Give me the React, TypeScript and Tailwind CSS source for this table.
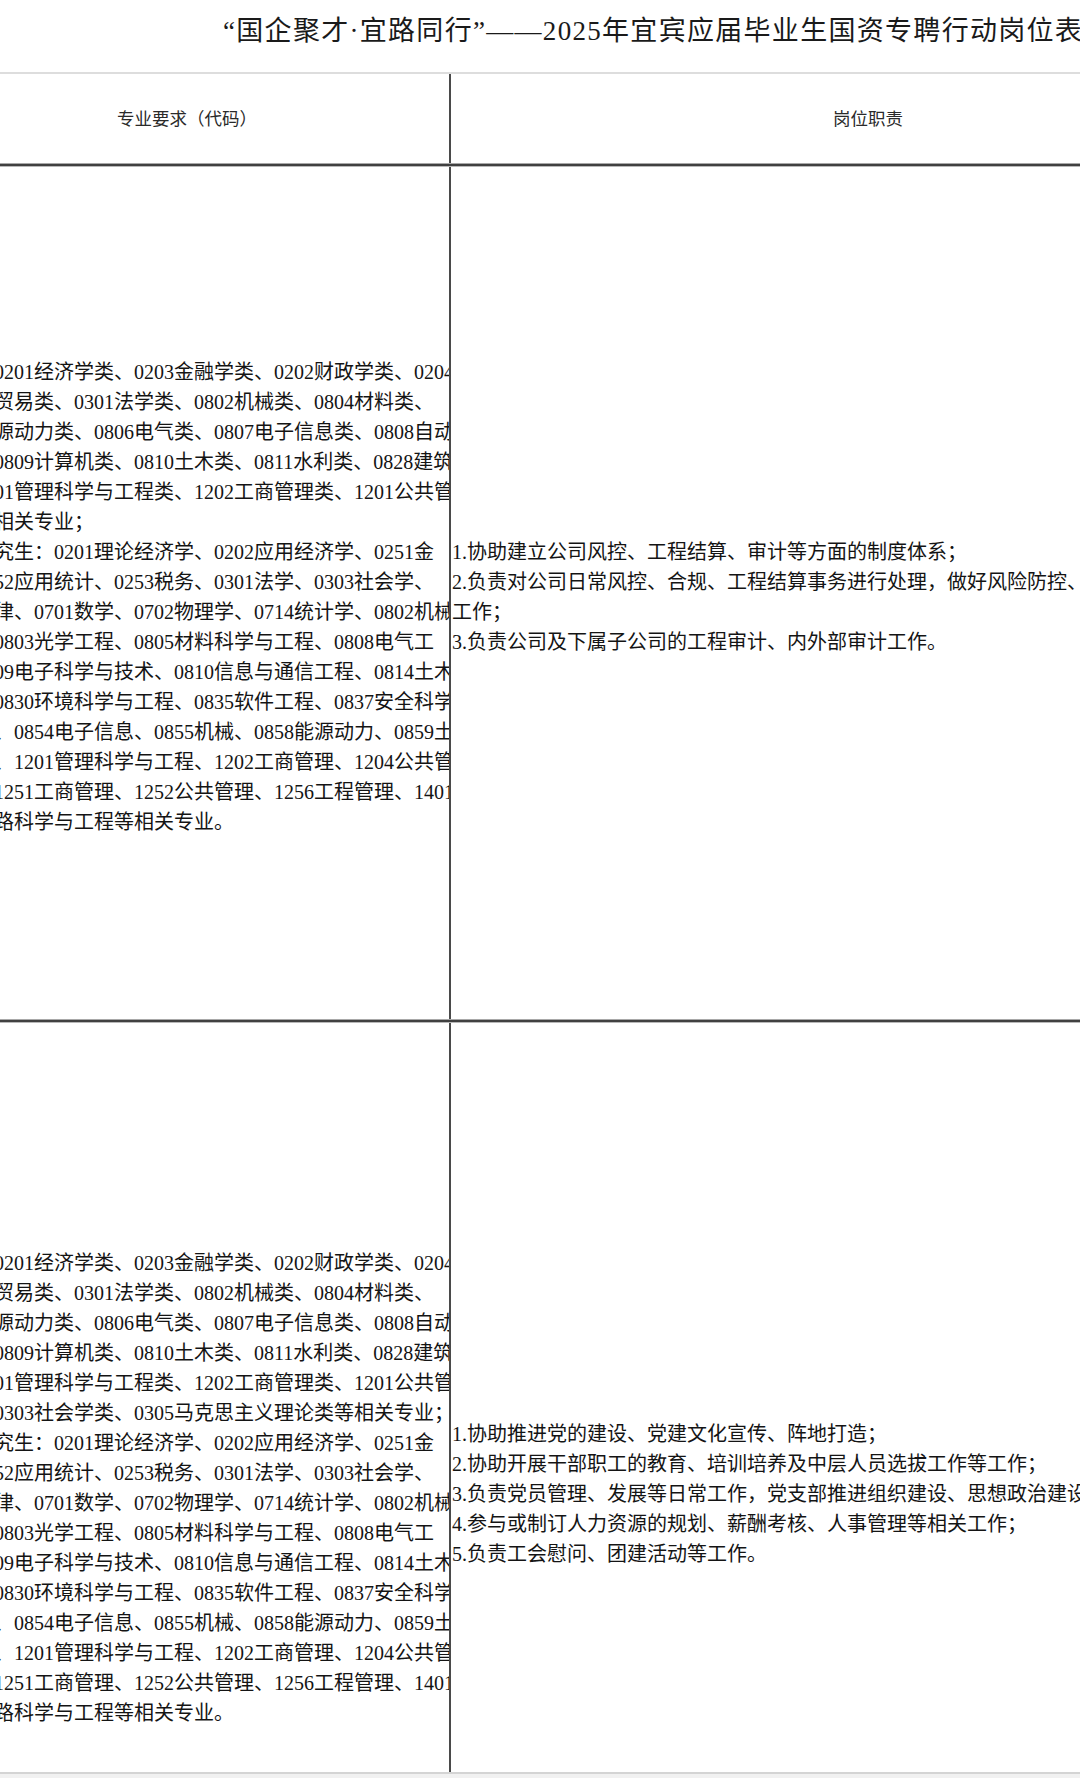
import React from "react";

const row1Left: string[] = [
  "0201经济学类、0203金融学类、0202财政学类、0204",
  "贸易类、0301法学类、0802机械类、0804材料类、",
  "源动力类、0806电气类、0807电子信息类、0808自动",
  "0809计算机类、0810土木类、0811水利类、0828建筑",
  "01管理科学与工程类、1202工商管理类、1201公共管",
  "相关专业；",
  "究生：0201理论经济学、0202应用经济学、0251金",
  "52应用统计、0253税务、0301法学、0303社会学、",
  "律、0701数学、0702物理学、0714统计学、0802机械",
  "0803光学工程、0805材料科学与工程、0808电气工",
  "09电子科学与技术、0810信息与通信工程、0814土木",
  "0830环境科学与工程、0835软件工程、0837安全科学",
  "、0854电子信息、0855机械、0858能源动力、0859土",
  "、1201管理科学与工程、1202工商管理、1204公共管",
  "1251工商管理、1252公共管理、1256工程管理、1401",
  "路科学与工程等相关专业。",
];

const row2Left: string[] = [
  "0201经济学类、0203金融学类、0202财政学类、0204",
  "贸易类、0301法学类、0802机械类、0804材料类、",
  "源动力类、0806电气类、0807电子信息类、0808自动",
  "0809计算机类、0810土木类、0811水利类、0828建筑",
  "01管理科学与工程类、1202工商管理类、1201公共管",
  "0303社会学类、0305马克思主义理论类等相关专业；",
  "究生：0201理论经济学、0202应用经济学、0251金",
  "52应用统计、0253税务、0301法学、0303社会学、",
  "律、0701数学、0702物理学、0714统计学、0802机械",
  "0803光学工程、0805材料科学与工程、0808电气工",
  "09电子科学与技术、0810信息与通信工程、0814土木",
  "0830环境科学与工程、0835软件工程、0837安全科学",
  "、0854电子信息、0855机械、0858能源动力、0859土",
  "、1201管理科学与工程、1202工商管理、1204公共管",
  "1251工商管理、1252公共管理、1256工程管理、1401",
  "路科学与工程等相关专业。",
];

const row1Right: string[] = [
  "1.协助建立公司风控、工程结算、审计等方面的制度体系；",
  "2.负责对公司日常风控、合规、工程结算事务进行处理，做好风险防控、",
  "工作；",
  "3.负责公司及下属子公司的工程审计、内外部审计工作。",
];

const row2Right: string[] = [
  "1.协助推进党的建设、党建文化宣传、阵地打造；",
  "2.协助开展干部职工的教育、培训培养及中层人员选拔工作等工作；",
  "3.负责党员管理、发展等日常工作，党支部推进组织建设、思想政治建设",
  "4.参与或制订人力资源的规划、薪酬考核、人事管理等相关工作；",
  "5.负责工会慰问、团建活动等工作。",
];

function DoubleLine() {
  return (
    <div className="flex flex-col shrink-0">
      <div className="h-[1px] bg-[#a8a8a8]" />
      <div className="h-[2px] bg-[#404040]" />
      <div className="h-[1px] bg-[#b8b8b8]" />
    </div>
  );
}

function LeftCell({ lines, pad }: { lines: string[]; pad: string }) {
  return (
    <div className={"w-[449px] shrink-0 overflow-hidden flex flex-col justify-center " + pad}>
      {lines.map((l, i) => (
        <div key={i} className="ml-[-6px] whitespace-nowrap text-[20px] leading-[30px]">
          {l}
        </div>
      ))}
    </div>
  );
}

function RightCell({ lines }: { lines: string[] }) {
  return (
    <div className="flex-1 min-w-0 overflow-hidden flex flex-col justify-center pt-[7px] pl-[1px]">
      {lines.map((l, i) => (
        <div key={i} className="whitespace-nowrap text-[20px] leading-[30px]">
          {l}
        </div>
      ))}
    </div>
  );
}

function Divider() {
  return <div className="w-[2px] shrink-0 bg-[#4a4a4a]" />;
}

export default function App() {
  return (
    <div className="w-[1080px] h-[1778px] overflow-hidden bg-white flex flex-col text-[#141414] font-['Liberation_Serif','Noto_Sans_CJK_SC',serif]">
      <div className="flex-1 min-h-0 overflow-hidden flex flex-col">
        <div className="h-[72px] shrink-0 pl-[223px] whitespace-nowrap overflow-hidden text-[27px] leading-[62px] tracking-[1.3px] text-[#1a1a1a]">
          “国企聚才·宜路同行”——2025年宜宾应届毕业生国资专聘行动岗位表
        </div>
        <div className="h-[2px] shrink-0 bg-[#dddddd]" />
        <div className="h-[89px] shrink-0 flex">
          <div className="w-[449px] shrink-0 flex items-center pl-[117px] text-[17.5px] text-[#2a2a2a] font-['Noto_Sans_CJK_SC',sans-serif]">
            专业要求（代码）
          </div>
          <Divider />
          <div className="flex-1 flex items-center pl-[382px] text-[17.5px] text-[#2a2a2a] font-['Noto_Sans_CJK_SC',sans-serif]">
            岗位职责
          </div>
        </div>
        <DoubleLine />
        <div className="h-[852px] shrink-0 flex">
          <LeftCell lines={row1Left} pad="pt-[7px]" />
          <Divider />
          <RightCell lines={row1Right} />
        </div>
        <DoubleLine />
        <div className="h-[934px] shrink-0 flex">
          <LeftCell lines={row2Left} pad="pb-[5px]" />
          <Divider />
          <RightCell lines={row2Right} />
        </div>
      </div>
      <div className="h-[6px] shrink-0 border-t-2 border-[#d4d4d4] bg-[#f1f1f1]" />
    </div>
  );
}
